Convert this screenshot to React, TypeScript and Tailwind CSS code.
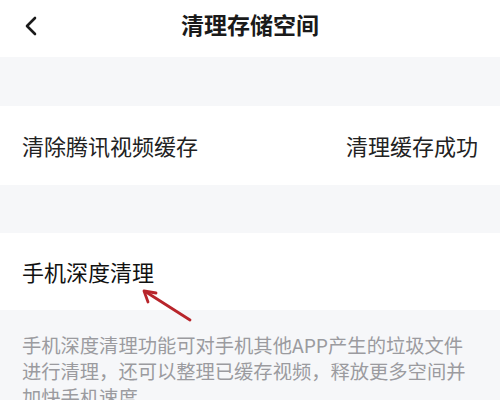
import React from 'react';

const font = { fontFamily: '"Noto Sans CJK SC", "Noto Sans", sans-serif' };

const App: React.FC = () => {
  return (
    <div className="relative w-[500px] h-[400px] overflow-hidden bg-[#f6f7f9]" style={font}>
      {/* Header */}
      <div className="relative h-[57px] bg-white flex items-center justify-center">
        <svg className="absolute left-[22px] top-[15px]" width="18" height="22" viewBox="0 0 18 22" fill="none">
          <path d="M13 3 L5 11 L13 19" stroke="#1a1a1a" strokeWidth="2.6" strokeLinecap="round" strokeLinejoin="round" />
        </svg>
        <span className="text-[23px] font-semibold text-[#1a1a1a] leading-none -mt-[8px]">清理存储空间</span>
      </div>

      <div className="h-[49px]" />

      {/* Cache row */}
      <div className="h-[79px] bg-white flex items-center justify-between px-[22px]">
        <span className="text-[22px] text-[#222] leading-none -mt-[2px]">清除腾讯视频缓存</span>
        <span className="text-[22px] text-[#222] leading-none -mt-[2px]">清理缓存成功</span>
      </div>

      <div className="h-[48px]" />

      {/* Deep clean row */}
      <div className="h-[77px] bg-white flex items-center px-[22px]">
        <span className="text-[22px] text-[#111] leading-none -mt-[2px]">手机深度清理</span>
      </div>

      {/* Description */}
      <div className="px-[22px] pt-[22px] text-[19.3px] leading-[26px] text-[#9b9b9f] whitespace-nowrap">
        <div>手机深度清理功能可对手机其他APP产生的垃圾文件</div>
        <div>进行清理，还可以整理已缓存视频，释放更多空间并</div>
        <div>加快手机速度</div>
      </div>

      {/* Red annotation arrow */}
      <svg className="absolute left-[138px] top-[286px]" width="60" height="40" viewBox="0 0 60 40" fill="none">
        <path d="M52 34 L8 6" stroke="#b8252b" strokeWidth="2.8" strokeLinecap="round" />
        <path d="M6 5 L18 7 M6 5 L10 16" stroke="#b8252b" strokeWidth="2.8" strokeLinecap="round" />
      </svg>
    </div>
  );
};

export default App;
